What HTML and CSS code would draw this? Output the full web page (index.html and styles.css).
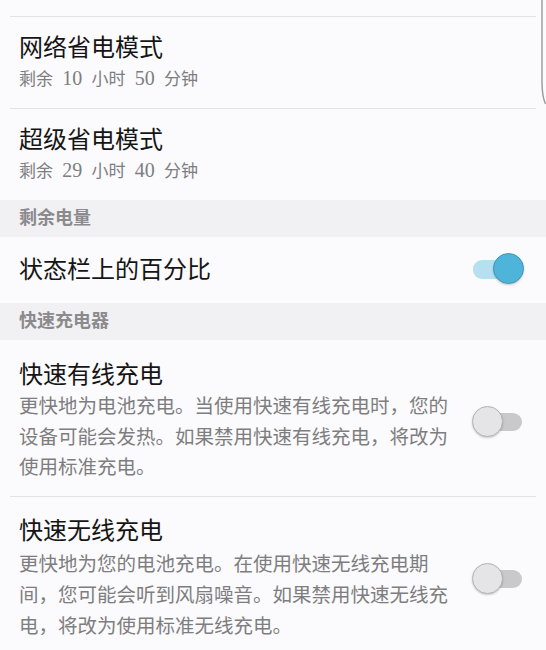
FILE: index.html
```html
<!DOCTYPE html>
<html lang="zh-CN">
<head>
  <meta charset="UTF-8">
  <title>电池</title>
  <link rel="stylesheet" href="styles.css">
</head>
<body>

  <div class="list">
    <div class="top-space"></div>

    <div class="item">
      <div class="text">
        <div class="title">网络省电模式</div>
        <div class="sub">剩余 <span class="num">10</span> 小时 <span class="num">50</span> 分钟</div>
      </div>
    </div>

    <div class="item">
      <div class="text">
        <div class="title">超级省电模式</div>
        <div class="sub">剩余 <span class="num">29</span> 小时 <span class="num">40</span> 分钟</div>
      </div>
    </div>

    <div class="section">剩余电量</div>

    <div class="item single">
      <div class="text">
        <div class="title">状态栏上的百分比</div>
      </div>
      <div class="switch on"><span class="track"></span><span class="thumb"></span></div>
    </div>

    <div class="section">快速充电器</div>

    <div class="item first">
      <div class="text">
        <div class="title">快速有线充电</div>
        <div class="desc">更快地为电池充电。当使用快速有线充电时，您的设备可能会发热。如果禁用快速有线充电，将改为使用标准充电。</div>
      </div>
      <div class="switch"><span class="track"></span><span class="thumb"></span></div>
    </div>

    <div class="item last">
      <div class="text">
        <div class="title">快速无线充电</div>
        <div class="desc">更快地为您的电池充电。在使用快速无线充电期间，您可能会听到风扇噪音。如果禁用快速无线充电，将改为使用标准无线充电。</div>
      </div>
      <div class="switch"><span class="track"></span><span class="thumb"></span></div>
    </div>
  </div>

  <svg class="edge" width="8" height="110" viewBox="0 0 8 110">
    <path d="M4 0 L4 82 Q4 96 7.5 104" fill="none" stroke="#9a999c" stroke-width="1.4"/>
  </svg>

</body>
</html>
```

FILE: styles.css
```css
html, body {
  margin: 0;
  padding: 0;
  background-color: #fbfafc;
}
body {
  font-family: "Liberation Serif", "Noto Sans CJK SC", serif;
  overflow: hidden;
  height: 650px;
}
.list {
  width: 546px;
}
.top-space {
  height: 16px;
}
.item {
  display: flex;
  align-items: center;
  gap: 15px;
  padding: 16px 12px 14px 9px;
  border-top: 1px solid #e3e2e5;
  margin: 0 10px;
}
.item.single {
  border-top: none;
  height: 66px;
  padding-top: 0;
  padding-bottom: 0;
  box-sizing: border-box;
}
.item.first {
  border-top: none;
  padding-top: 20px;
  padding-bottom: 12px;
}
.item.last {
  padding-top: 19px;
}
.item.last .desc {
  margin-top: 3px;
  line-height: 31px;
}
.text {
  flex: 1;
  min-width: 0;
}
.title {
  font-size: 24px;
  line-height: 30px;
  color: #151515;
}
.sub {
  margin-top: 3px;
  font-size: 17px;
  line-height: 28px;
  height: 28px;
  color: #7e7e80;
  word-spacing: 5px;
}
.sub .num {
  font-size: 20px;
  line-height: 0;
}
.desc {
  margin-top: 2px;
  font-size: 19.5px;
  line-height: 30.5px;
  color: #7e7e80;
}
.section {
  height: 37px;
  line-height: 37px;
  background-color: #f1f0f2;
  padding-left: 19px;
  font-size: 18px;
  font-weight: bold;
  color: #8b8a8d;
}
.switch {
  position: relative;
  width: 52px;
  height: 32px;
  flex: 0 0 52px;
}
.switch .track {
  position: absolute;
  left: 5px;
  right: 2px;
  top: 7px;
  height: 18px;
  border-radius: 9px;
  background-color: #c9c8cb;
}
.switch .thumb {
  position: absolute;
  left: 0;
  top: 0;
  width: 29px;
  height: 29px;
  border-radius: 50%;
  background-color: #e5e4e6;
  border: 1px solid #b4b3b6;
  box-shadow: 0 1px 2px rgba(0,0,0,0.2);
}
.switch.on .track {
  left: 1px;
  right: 5px;
  top: 6px;
  height: 19px;
  background-color: #b6e0ef;
}
.switch.on .thumb {
  left: auto;
  right: 0;
  top: -1px;
  background-color: #4fb4da;
  border-color: #3d97ba;
}
.edge {
  position: fixed;
  top: 0;
  right: 0;
}
```
